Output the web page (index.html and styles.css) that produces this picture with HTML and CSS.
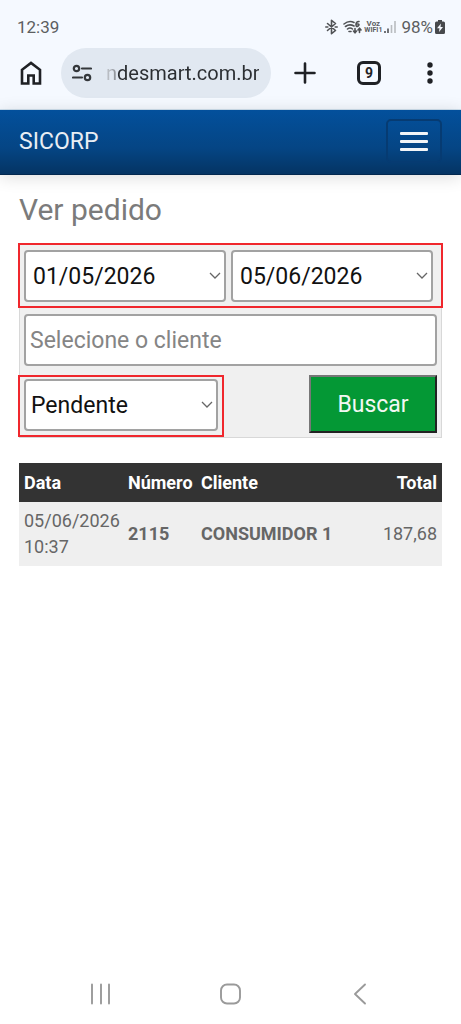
FILE: index.html
```html
<!DOCTYPE html>
<html lang="pt-BR">
<head>
<meta charset="utf-8">
<meta name="viewport" content="width=device-width, initial-scale=1">
<title>SICORP - Ver pedido</title>
<link rel="stylesheet" href="styles.css">
</head>
<body>
<header class="chrome">
  <div class="status">
    <span class="clock">12:39</span>
    <div class="indicators">
      <svg class="bluetooth" width="13" height="16" viewBox="0 0 13 16"><path d="M2.500 4.500l8 7-4 3.200V1.300l4 3.200-8 7"/><path d="M.8 8h2M10.200 8h2"/></svg>
      <svg class="wifi" width="19" height="16" viewBox="0 0 19 16"><path d="M1 5q5-4 10-1.500M2.500 7.500q4-3 8.500-.5M4.500 10q2.500-2 5 0M6 12.500h2"/><path d="M16 2.500q-3 0-3 3t2 1.500 0-2-2 0"/><path d="M12 9.500v4M10.500 12l1.500 1.800 1.500-1.800M16.500 13.500v-4M15 11l1.500-1.800L18 11"/></svg>
      <span class="voz"><span>Voz</span><span>WIFI1</span></span>
      <svg class="signal" width="12" height="14" viewBox="0 0 12 14"><path class="on" d="M1 11v2M4 8.500V13"/><path class="off" d="M7.500 5v8M11 1v12"/></svg>
      <span class="percent">98%</span>
      <svg class="battery" width="10" height="14" viewBox="0 0 10 14"><path class="cell" d="M3 0h4v1.500h1.500Q10 1.500 10 3v9.500q0 1.500-1.500 1.500h-7Q0 14 0 12.500V3q0-1.500 1.500-1.500H3z"/><path class="bolt" d="M6 3.500L2 8.200h2.500L4 12l4-5H5.500z"/></svg>
    </div>
  </div>
  <div class="toolbar">
    <button class="tool home" type="button" aria-label="Início"><svg width="24" height="26" viewBox="0 0 24 26"><path d="M3 23.500V9.800L12 3l9 6.800v13.700h-6.300v-8H9.300v8z"/></svg></button>
    <div class="address">
      <svg width="20" height="18" viewBox="0 0 20 18"><circle cx="4.500" cy="4.500" r="2.700"/><path d="M10 4.500h9M1 13.500h9"/><circle cx="15.500" cy="13.500" r="2.700"/></svg>
      <span class="url">ndesmart.com.br</span>
    </div>
    <button class="tool plus" type="button" aria-label="Nova guia"><svg width="22" height="22" viewBox="0 0 22 22"><path d="M11 1.500v19M1.500 11h19"/></svg></button>
    <button class="tool tabs" type="button" aria-label="Guias"><span>9</span></button>
    <button class="tool more" type="button" aria-label="Mais"><svg width="8" height="22" viewBox="0 0 8 22"><circle cx="4" cy="3" r="2.700"/><circle cx="4" cy="11" r="2.700"/><circle cx="4" cy="19" r="2.700"/></svg></button>
  </div>
</header>
<nav class="navbar">
  <a class="brand" href="#">SICORP</a>
  <button class="menu" type="button" aria-label="Menu"><span></span><span></span><span></span></button>
</nav>
<main class="content">
  <h1>Ver pedido</h1>
  <form class="filters">
    <div class="marked dates">
      <select class="field date" aria-label="Data inicial"><option>01/05/2026</option></select>
      <select class="field date" aria-label="Data final"><option>05/06/2026</option></select>
    </div>
    <div class="client">
      <input class="field" type="text" placeholder="Selecione o cliente" aria-label="Cliente">
    </div>
    <div class="actions">
      <div class="marked state">
        <select class="field" aria-label="Situação"><option>Pendente</option></select>
      </div>
      <button class="search" type="button">Buscar</button>
    </div>
  </form>
  <table class="orders">
    <thead><tr><th class="when">Data</th><th class="number">Número</th><th>Cliente</th><th class="total">Total</th></tr></thead>
    <tbody><tr><td>05/06/2026 10:37</td><td class="strong">2115</td><td class="strong">CONSUMIDOR 1</td><td class="total">187,68</td></tr></tbody>
  </table>
</main>
<footer class="system">
  <button type="button" aria-label="Recentes"><svg width="22" height="22" viewBox="0 0 22 22"><path d="M2 1.500v19M11 1.500v19M19 1.500v19"/></svg></button>
  <button type="button" aria-label="Tela inicial"><svg width="22" height="22" viewBox="0 0 22 22"><rect x="1" y="1.500" width="19" height="19" rx="6"/></svg></button>
  <button type="button" aria-label="Voltar"><svg width="22" height="22" viewBox="0 0 22 22"><path d="M15 1.500L5 11l10 9.500"/></svg></button>
</footer>
</body>
</html>
```
FILE: styles.css
```css
* { box-sizing: border-box; }
body {
  margin: 0;
  min-height: 100vh;
  display: flex;
  flex-direction: column;
  background: #fff;
  color: #666;
  font-family: Roboto, "Liberation Sans", sans-serif;
}
button, select, input { font-family: inherit; }
svg { display: block; fill: none; stroke-linecap: round; stroke-linejoin: round; }

.chrome {
  background: #f5f9ff;
  border-bottom: 1px solid #cfe0ee;
}
.status {
  height: 48px;
  padding: 5px 16px 0 17px;
  display: flex;
  align-items: center;
  justify-content: space-between;
  color: #5c5e61;
  font-size: 17px;
}
.indicators { display: flex; align-items: center; gap: 2px; }
.bluetooth, .wifi { stroke: #505255; stroke-width: 1.600; }
.bluetooth { margin-right: 3px; }
.voz {
  display: flex;
  flex-direction: column;
  align-items: center;
  font-size: 8px;
  line-height: 7px;
  font-weight: 700;
}
.voz span:last-child { font-size: 7px; line-height: 6px; }
.signal { stroke-width: 1.600; stroke-linecap: butt; }
.signal .on { stroke: #505255; }
.signal .off { stroke: #b9bcc0; }
.percent { margin-left: 3px; }
.cell { fill: #47494c; }
.bolt { fill: #f5f9ff; }

.toolbar {
  height: 61px;
  padding: 0 12px 11px 19px;
  display: flex;
  align-items: center;
}
.tool {
  border: 0;
  padding: 0;
  background: none;
  display: flex;
  align-items: center;
  justify-content: center;
  color: #1f2125;
}
.home svg { stroke: #1f2125; stroke-width: 2.600; stroke-linejoin: miter; }
.address {
  flex: 1;
  min-width: 0;
  height: 50px;
  margin: 0 23px 0 18px;
  padding: 0 0 0 11px;
  border-radius: 25px;
  background: #e1e8f1;
  display: flex;
  align-items: center;
  gap: 14px;
}
.address svg { stroke: #34373b; stroke-width: 2.200; flex: none; }
.url {
  font-size: 20px;
  white-space: nowrap;
  background: linear-gradient(90deg, #c8ccd2, #8b8f95 10px, #2b2e32 11px);
  background-clip: text;
  color: transparent;
}
.plus svg { stroke: #1f2125; stroke-width: 2.600; }
.tabs { margin: 0 38px 0 41px; }
.tabs span {
  width: 24px;
  height: 24px;
  border: 3px solid #1f2125;
  border-radius: 6px;
  font-size: 14px;
  line-height: 18px;
  font-weight: 700;
}
.more { width: 22px; margin-right: 8px; }
.more svg { fill: #1f2125; }

.navbar {
  height: 65px;
  padding: 0 19px 2px;
  display: flex;
  align-items: center;
  justify-content: space-between;
  background: linear-gradient(#03509c, #054584 60%, #053463);
  border-bottom: 1px solid #03284f;
  box-shadow: 0 2px 16px rgba(0, 0, 0, .14);
}
.brand {
  color: #e9eef4;
  font-size: 23px;
  text-decoration: none;
}
.menu {
  width: 56px;
  height: 44px;
  padding: 0;
  border: 2px solid #063b72;
  border-radius: 5px;
  background: none;
  display: flex;
  flex-direction: column;
  align-items: center;
  justify-content: center;
  gap: 5px;
}
.menu span { width: 28px; height: 3px; border-radius: 1px; background: #f2f5f8; }

.content { flex: 1; padding: 13px 19px 0; }
h1 {
  margin: 0 0 12px;
  color: #7b7b7b;
  font-size: 30px;
  line-height: 43px;
  font-weight: 400;
}
.filters {
  background: #f0f0f0;
  border: 1px solid #d8d8d8;
  border-top: 0;
}
.marked { border: 2px solid #f0272d; }
.dates {
  margin: 0 -2px 6px;
  padding: 5px 8px 4px 4px;
  display: flex;
  gap: 5px;
}
.field {
  display: block;
  width: 100%;
  min-width: 0;
  height: 52px;
  padding: 0 5px;
  border: 2px solid #a2a2a2;
  border-radius: 4px;
  background-color: #fff;
  color: #111;
  font-size: 23px;
}
select.field {
  appearance: none;
  background-image: url("data:image/svg+xml,%3Csvg xmlns='http://www.w3.org/2000/svg' width='12' height='8' fill='none' stroke='%23666' stroke-width='1.300'%3E%3Cpath d='M1 1l5 5 5-5'/%3E%3C/svg%3E");
  background-repeat: no-repeat;
  background-position: right 3px center;
}
.date { flex: 1; }
select.date { padding-left: 7px; }
.field::placeholder { color: #858585; opacity: 1; }
.client { padding: 0 4px; }
.client .field { padding: 0 4px; }
.actions {
  margin-top: 9px;
  padding-right: 4px;
  display: flex;
  align-items: flex-start;
  justify-content: space-between;
}
.state {
  width: 206px;
  margin-left: -2px;
  padding: 2px 4px 4px;
}
.search {
  width: 128px;
  height: 58px;
  border: 2px solid;
  border-color: #777 #222 #222 #777;
  background: #049835;
  color: #f3f8f3;
  font-size: 23px;
}
.orders {
  width: 100%;
  margin-top: 25px;
  border-collapse: collapse;
  table-layout: fixed;
  font-size: 18px;
  line-height: 26px;
}
.orders th, .orders td { padding: 6px 5px; text-align: left; }
.orders thead { background: #333; color: #fff; }
.orders thead th { padding: 7px 5px 6px; }
.orders tbody { background: #efefef; }
.orders .when { width: 104px; }
.orders .number { width: 73px; }
.orders .total { width: 96px; text-align: right; }
.strong { font-weight: 700; }
.orders td:first-child { padding-right: 0; }

.system {
  height: 60px;
  display: flex;
  justify-content: center;
  gap: 108px;
}
.system button {
  height: 60px;
  width: 22px;
  padding: 0;
  border: 0;
  background: none;
}
.system svg { stroke: #9a9a9a; stroke-width: 1.900; }
```
